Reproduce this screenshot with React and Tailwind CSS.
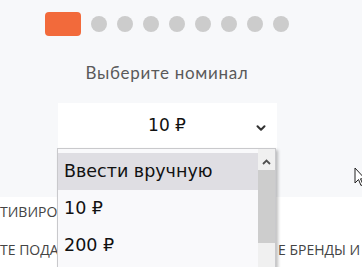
import { ChevronDown } from 'lucide-react'

const dots = [1, 2, 3, 4, 5, 6, 7, 8]
const options = ['Ввести вручную', '10 ₽', '200 ₽']

const App = () => {
  return (
    <div className="relative w-[362px] h-[267px] overflow-hidden bg-white font-['Lato',sans-serif]">
      <div className="h-[197px] bg-[#f7f8fa]">
        <div className="w-[244px] ml-[45px] pt-3 flex flex-col items-center">
          <div className="flex items-center gap-[10px]">
            <div className="w-9 h-6 rounded-[4px] bg-[#f26a3b]" />
            {dots.map(d => (
              <div key={d} className="w-4 h-4 rounded-full bg-[#cccccc]" />
            ))}
          </div>
          <p className="mt-[27px] text-[17px] leading-5 text-[#5a5a5a] tracking-[0.7px]">Выберите номинал</p>
          <div className="mt-[20px] w-[219px] h-[46px] bg-white flex items-center relative">
            <span className="flex-1 text-center text-[17px] text-[#111] font-['DejaVu_Sans',sans-serif]">10 ₽</span>
            <ChevronDown size={14} strokeWidth={3.5} className="absolute right-[9px] top-[18px] text-[#333]" />
          </div>
        </div>
      </div>

      <div className="pt-[4px] text-[14px] text-[#444] uppercase font-['Open_Sans',sans-serif]">
        <p className="w-[57px] overflow-hidden whitespace-nowrap">тивировать</p>
        <div className="mt-[17px] flex justify-between whitespace-nowrap">
          <span className="w-[57px] overflow-hidden">те подарочные</span>
          <span className="w-[85px] overflow-hidden pl-[1px]">е бренды и</span>
        </div>
      </div>

      {/* dropdown list */}
      <div className="absolute left-[57px] top-[148px] w-[219px] h-[130px] bg-[#f9f9fb] border border-[#c9c9cc] shadow-[2px_2px_3px_rgba(0,0,0,0.25)] flex font-['DejaVu_Sans',sans-serif]">
        <div className="flex-1 pt-1">
          {options.map((o, i) => (
            <div key={o} className={`h-[37px] flex items-center pl-[6px] text-[17.5px] text-[#111] ${i === 0 ? 'bg-[#dfdee3]' : ''}`}>
              {o}
            </div>
          ))}
        </div>
        <div className="w-[17px] bg-[#f0f0f0] flex flex-col items-center">
          <svg width="9" height="6" viewBox="0 0 9 6" className="mt-[10px]">
            <path d="M1 5 L4.5 1.5 L8 5" stroke="#505050" strokeWidth="1.8" fill="none" />
          </svg>
          <div className="mt-[5px] w-full h-[73px] bg-[#cdcdcd]" />
        </div>
      </div>

      {/* mouse cursor */}
      <svg width="12" height="20" viewBox="0 0 12 20" className="absolute left-[354px] top-[167px]">
        <path d="M1 1 L1 16 L4.5 12.5 L7 18.5 L9 17.5 L6.5 11.8 L11 11.8 Z" fill="#fff" stroke="#222" strokeWidth="1" />
      </svg>
    </div>
  )
}

export default App
